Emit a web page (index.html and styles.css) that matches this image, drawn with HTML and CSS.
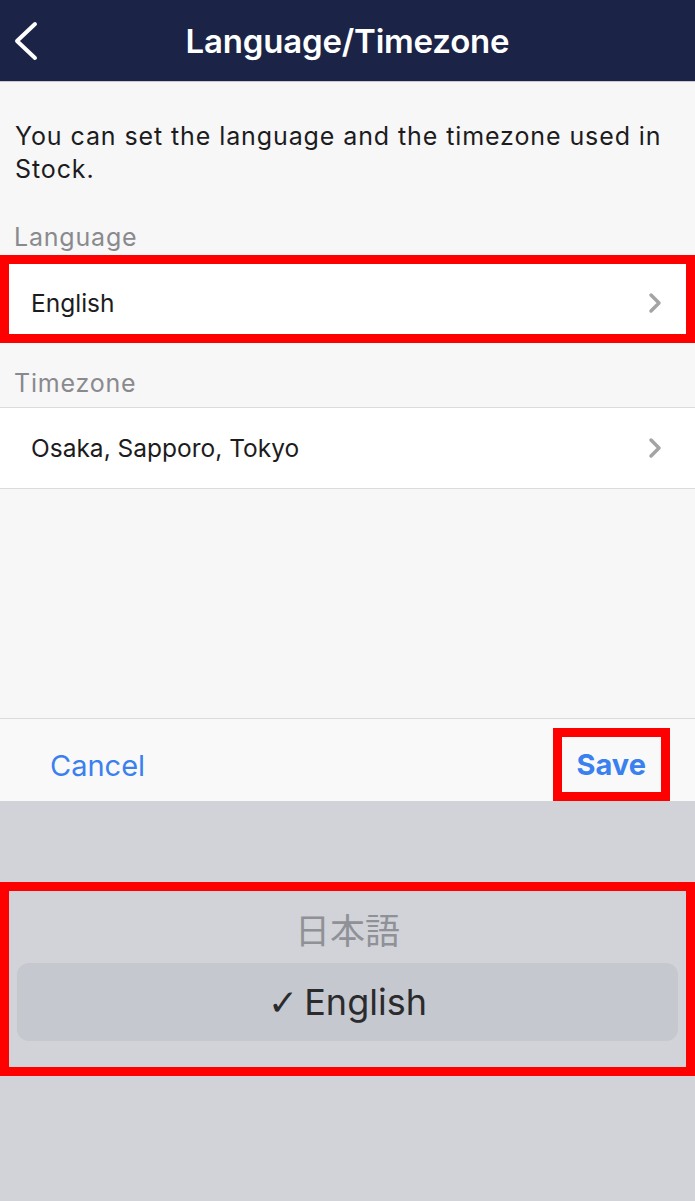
FILE: index.html
```html
<!DOCTYPE html>
<html>
<head>
	<meta charset="utf-8">
	<title>Language/Timezone</title>
	<link rel="stylesheet" href="styles.css">
</head>
<body>
	<div class="screen">
		<header class="nav">
			<a class="nav__back" href="#">
				<svg width="26" height="40" viewBox="0 0 26 40">
					<path d="M21 3 L3 20 L21 37" fill="none" stroke="#ffffff" stroke-width="4" stroke-linecap="round" stroke-linejoin="round"/>
				</svg>
			</a>
			<h1 class="nav__title">Language/Timezone</h1>
			<div></div>
		</header>

		<main class="settings">
			<p class="settings__intro">You can set the language and the timezone used in Stock.</p>

			<div class="settings__label settings__label--first">Language</div>
			<div class="settings__row settings__row--marked">
				<span>English</span>
				<svg class="settings__arrow" width="14" height="22" viewBox="0 0 14 22">
					<path d="M3 3 L11 11 L3 19" fill="none" stroke="#a4a4a6" stroke-width="3.5" stroke-linecap="round" stroke-linejoin="round"/>
				</svg>
			</div>

			<div class="settings__label">Timezone</div>
			<div class="settings__row">
				<span>Osaka, Sapporo, Tokyo</span>
				<svg class="settings__arrow" width="14" height="22" viewBox="0 0 14 22">
					<path d="M3 3 L11 11 L3 19" fill="none" stroke="#a4a4a6" stroke-width="3.5" stroke-linecap="round" stroke-linejoin="round"/>
				</svg>
			</div>
		</main>

		<div class="toolbar">
			<a class="toolbar__btn" href="#">Cancel</a>
			<a class="toolbar__btn toolbar__btn--save" href="#">Save</a>
		</div>

		<div class="picker">
			<div class="picker__mark">
				<div class="picker__item">日本語</div>
				<div class="picker__item picker__item--selected"><span class="picker__check">✓</span> English</div>
			</div>
		</div>
	</div>
</body>
</html>
```

FILE: styles.css
```css
* {
	box-sizing: border-box;
}
html, body {
	margin: 0;
	padding: 0;
}
body {
	font-family: Inter, "Liberation Sans", "Noto Sans CJK JP", sans-serif;
	color: #1c1c1e;
}
.screen {
	display: flex;
	flex-direction: column;
	width: 695px;
	height: 1201px;
	overflow: hidden;
}

/* top bar */
.nav {
	display: grid;
	grid-template-columns: 70px 1fr 70px;
	align-items: center;
	height: 82px;
	background: #1b2447;
	border-bottom: 1px solid #c9cad0;
}
.nav__back {
	display: flex;
	padding-left: 14px;
}
.nav__title {
	margin: 0;
	text-align: center;
	color: #ffffff;
	font-size: 33px;
	font-weight: 600;
	letter-spacing: -0.2px;
}

/* settings list */
.settings {
	flex: 1;
	background: #f7f7f7;
}
.settings__intro {
	margin: 0;
	padding: 38px 15px 0;
	font-size: 25px;
	line-height: 33px;
	letter-spacing: 0.9px;
}
.settings__label {
	padding: 25px 14px 0;
	margin-bottom: 9px;
	font-size: 25px;
	line-height: 30px;
	letter-spacing: 0.8px;
	color: #8a8a8e;
}
.settings__label--first {
	padding-top: 36px;
	margin-bottom: 3px;
}
.settings__row {
	display: flex;
	align-items: center;
	justify-content: space-between;
	height: 82px;
	padding: 0 33px 0 31px;
	background: #ffffff;
	border-top: 1px solid #dcdcde;
	border-bottom: 1px solid #dcdcde;
	font-size: 24.5px;
}
.settings__row--marked {
	height: 88px;
	padding-top: 8px;
	border: none;
	box-shadow: inset 0 0 0 9px #ff0000;
}

/* Cancel / Save */
.toolbar {
	display: flex;
	align-items: center;
	justify-content: space-between;
	height: 83px;
	padding: 11px 25px 0 50px;
	background: #f9f9f9;
	border-top: 1px solid #dadadc;
}
.toolbar__btn {
	color: #3a80ef;
	font-size: 29px;
	text-decoration: none;
}
.toolbar__btn--save {
	align-self: flex-end;
	display: flex;
	align-items: center;
	height: 73px;
	padding: 0 15px;
	border: 9px solid #ff0000;
	font-weight: bold;
}

/* language wheel */
.picker {
	height: 400px;
	padding-top: 81px;
	background: #d1d3d9;
}
.picker__mark {
	padding: 0 8px 26px;
	border: 9px solid #ff0000;
}
.picker__item {
	display: flex;
	align-items: center;
	justify-content: center;
	height: 72px;
	padding-top: 2px;
	font-size: 35px;
	color: #8f9196;
}
.picker__item--selected {
	height: 78px;
	padding-top: 0;
	border-radius: 12px;
	background: #c5c8cf;
	font-size: 36px;
	color: #2b2b2e;
}
.picker__check {
	font-family: "DejaVu Sans", sans-serif;
	font-size: 36px;
	margin-right: 6px;
}
```
